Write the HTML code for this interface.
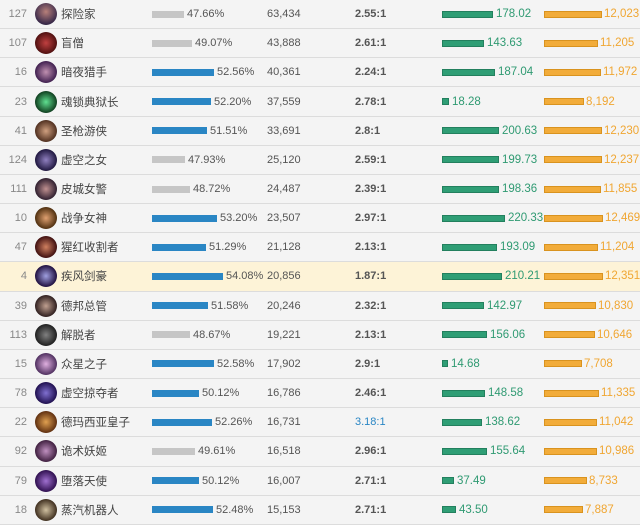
<!DOCTYPE html>
<html><head><meta charset="utf-8"><style>
body{margin:0;width:640px;height:525px;overflow:hidden;background:#f4f4f4;font-family:"Liberation Sans","Noto Sans CJK SC",sans-serif;font-size:11px;color:#666}
.r{position:relative;height:28.17px;border-bottom:1px solid #dcdcdc;background:#f4f4f4}
.r.h{background:#fdf3d7}
.r>*{position:absolute;top:50%;transform:translateY(-50%);white-space:nowrap}
.rk{right:613px;color:#888;text-align:right}
.av{left:35px;width:22px;height:22px;border-radius:50%;background:radial-gradient(circle at 50% 40%,#b8807a,#3a2a4a 70%,#1a1a2a)}
.nm{left:61px;color:#444;font-size:11.5px}
.wb{left:152px;display:flex;align-items:center;gap:3px;color:#555}
.bar{height:7px;display:inline-block}
.g{background:#c6c6c6}.b{background:#2a86c4}
.gm{left:267px;color:#555}
.kd{left:355px;font-weight:bold;color:#555}
.gb{left:442px;display:flex;align-items:center;gap:3px;color:#2f9a72;font-size:11.5px}
.gb .bar{background:#2f9e75;border:1px solid #23805e;box-sizing:border-box}
.ob{left:544px;display:flex;align-items:center;gap:2px;color:#f0a632;font-size:11.5px}
.ob .bar{background:#f2ac3a;border:1px solid #d9931f;box-sizing:border-box}
</style></head><body>
<div class="r"><span class="rk">127</span><span class="av"></span><span class="nm">探险家</span><span class="wb"><i class="bar g" style="width:32px"></i>47.66%</span><span class="gm">63,434</span><span class="kd">2.55:1</span><span class="gb"><i class="bar" style="width:51px"></i>178.02</span><span class="ob"><i class="bar" style="width:58px"></i>12,023</span></div>
<div class="r"><span class="rk">107</span><span class="av" style="background:radial-gradient(circle,#c04040,#501010 70%)"></span><span class="nm">盲僧</span><span class="wb"><i class="bar g" style="width:40px"></i>49.07%</span><span class="gm">43,888</span><span class="kd">2.61:1</span><span class="gb"><i class="bar" style="width:42px"></i>143.63</span><span class="ob"><i class="bar" style="width:54px"></i>11,205</span></div>
<div class="r"><span class="rk">16</span><span class="av" style="background:radial-gradient(circle,#c090b0,#402050 70%)"></span><span class="nm">暗夜猎手</span><span class="wb"><i class="bar b" style="width:62px"></i>52.56%</span><span class="gm">40,361</span><span class="kd">2.24:1</span><span class="gb"><i class="bar" style="width:53px"></i>187.04</span><span class="ob"><i class="bar" style="width:57px"></i>11,972</span></div>
<div class="r"><span class="rk">23</span><span class="av" style="background:radial-gradient(circle,#60e090,#104020 70%)"></span><span class="nm">魂锁典狱长</span><span class="wb"><i class="bar b" style="width:59px"></i>52.20%</span><span class="gm">37,559</span><span class="kd">2.78:1</span><span class="gb"><i class="bar" style="width:7px"></i>18.28</span><span class="ob"><i class="bar" style="width:40px"></i>8,192</span></div>
<div class="r"><span class="rk">41</span><span class="av" style="background:radial-gradient(circle,#d0a080,#503020 70%)"></span><span class="nm">圣枪游侠</span><span class="wb"><i class="bar b" style="width:55px"></i>51.51%</span><span class="gm">33,691</span><span class="kd">2.8:1</span><span class="gb"><i class="bar" style="width:57px"></i>200.63</span><span class="ob"><i class="bar" style="width:58px"></i>12,230</span></div>
<div class="r"><span class="rk">124</span><span class="av" style="background:radial-gradient(circle,#9080c0,#201840 70%)"></span><span class="nm">虚空之女</span><span class="wb"><i class="bar g" style="width:33px"></i>47.93%</span><span class="gm">25,120</span><span class="kd">2.59:1</span><span class="gb"><i class="bar" style="width:57px"></i>199.73</span><span class="ob"><i class="bar" style="width:58px"></i>12,237</span></div>
<div class="r"><span class="rk">111</span><span class="av" style="background:radial-gradient(circle,#c09090,#302030 70%)"></span><span class="nm">皮城女警</span><span class="wb"><i class="bar g" style="width:38px"></i>48.72%</span><span class="gm">24,487</span><span class="kd">2.39:1</span><span class="gb"><i class="bar" style="width:57px"></i>198.36</span><span class="ob"><i class="bar" style="width:57px"></i>11,855</span></div>
<div class="r"><span class="rk">10</span><span class="av" style="background:radial-gradient(circle,#e0a070,#503010 70%)"></span><span class="nm">战争女神</span><span class="wb"><i class="bar b" style="width:65px"></i>53.20%</span><span class="gm">23,507</span><span class="kd">2.97:1</span><span class="gb"><i class="bar" style="width:63px"></i>220.33</span><span class="ob"><i class="bar" style="width:59px"></i>12,469</span></div>
<div class="r"><span class="rk">47</span><span class="av" style="background:radial-gradient(circle,#d08060,#401010 70%)"></span><span class="nm">猩红收割者</span><span class="wb"><i class="bar b" style="width:54px"></i>51.29%</span><span class="gm">21,128</span><span class="kd">2.13:1</span><span class="gb"><i class="bar" style="width:55px"></i>193.09</span><span class="ob"><i class="bar" style="width:54px"></i>11,204</span></div>
<div class="r h"><span class="rk">4</span><span class="av" style="background:radial-gradient(circle,#a0a0e0,#201040 70%)"></span><span class="nm">疾风剑豪</span><span class="wb"><i class="bar b" style="width:71px"></i>54.08%</span><span class="gm">20,856</span><span class="kd">1.87:1</span><span class="gb"><i class="bar" style="width:60px"></i>210.21</span><span class="ob"><i class="bar" style="width:59px"></i>12,351</span></div>
<div class="r"><span class="rk">39</span><span class="av" style="background:radial-gradient(circle,#c0a090,#302020 70%)"></span><span class="nm">德邦总管</span><span class="wb"><i class="bar b" style="width:56px"></i>51.58%</span><span class="gm">20,246</span><span class="kd">2.32:1</span><span class="gb"><i class="bar" style="width:42px"></i>142.97</span><span class="ob"><i class="bar" style="width:52px"></i>10,830</span></div>
<div class="r"><span class="rk">113</span><span class="av" style="background:radial-gradient(circle,#808080,#202020 70%)"></span><span class="nm">解脱者</span><span class="wb"><i class="bar g" style="width:38px"></i>48.67%</span><span class="gm">19,221</span><span class="kd">2.13:1</span><span class="gb"><i class="bar" style="width:45px"></i>156.06</span><span class="ob"><i class="bar" style="width:51px"></i>10,646</span></div>
<div class="r"><span class="rk">15</span><span class="av" style="background:radial-gradient(circle,#e0b0e0,#503060 70%)"></span><span class="nm">众星之子</span><span class="wb"><i class="bar b" style="width:62px"></i>52.58%</span><span class="gm">17,902</span><span class="kd">2.9:1</span><span class="gb"><i class="bar" style="width:6px"></i>14.68</span><span class="ob"><i class="bar" style="width:38px"></i>7,708</span></div>
<div class="r"><span class="rk">78</span><span class="av" style="background:radial-gradient(circle,#8070d0,#201050 70%)"></span><span class="nm">虚空掠夺者</span><span class="wb"><i class="bar b" style="width:47px"></i>50.12%</span><span class="gm">16,786</span><span class="kd">2.46:1</span><span class="gb"><i class="bar" style="width:43px"></i>148.58</span><span class="ob"><i class="bar" style="width:55px"></i>11,335</span></div>
<div class="r"><span class="rk">22</span><span class="av" style="background:radial-gradient(circle,#e0a050,#603010 70%)"></span><span class="nm">德玛西亚皇子</span><span class="wb"><i class="bar b" style="width:60px"></i>52.26%</span><span class="gm">16,731</span><span class="kd" style="color:#2a86c4;font-weight:normal">3.18:1</span><span class="gb"><i class="bar" style="width:40px"></i>138.62</span><span class="ob"><i class="bar" style="width:53px"></i>11,042</span></div>
<div class="r"><span class="rk">92</span><span class="av" style="background:radial-gradient(circle,#c090c0,#402040 70%)"></span><span class="nm">诡术妖姬</span><span class="wb"><i class="bar g" style="width:43px"></i>49.61%</span><span class="gm">16,518</span><span class="kd">2.96:1</span><span class="gb"><i class="bar" style="width:45px"></i>155.64</span><span class="ob"><i class="bar" style="width:53px"></i>10,986</span></div>
<div class="r"><span class="rk">79</span><span class="av" style="background:radial-gradient(circle,#a070d0,#301050 70%)"></span><span class="nm">堕落天使</span><span class="wb"><i class="bar b" style="width:47px"></i>50.12%</span><span class="gm">16,007</span><span class="kd">2.71:1</span><span class="gb"><i class="bar" style="width:12px"></i>37.49</span><span class="ob"><i class="bar" style="width:43px"></i>8,733</span></div>
<div class="r"><span class="rk">18</span><span class="av" style="background:radial-gradient(circle,#d0c0a0,#403020 70%)"></span><span class="nm">蒸汽机器人</span><span class="wb"><i class="bar b" style="width:61px"></i>52.48%</span><span class="gm">15,153</span><span class="kd">2.71:1</span><span class="gb"><i class="bar" style="width:14px"></i>43.50</span><span class="ob"><i class="bar" style="width:39px"></i>7,887</span></div>
</body></html>
